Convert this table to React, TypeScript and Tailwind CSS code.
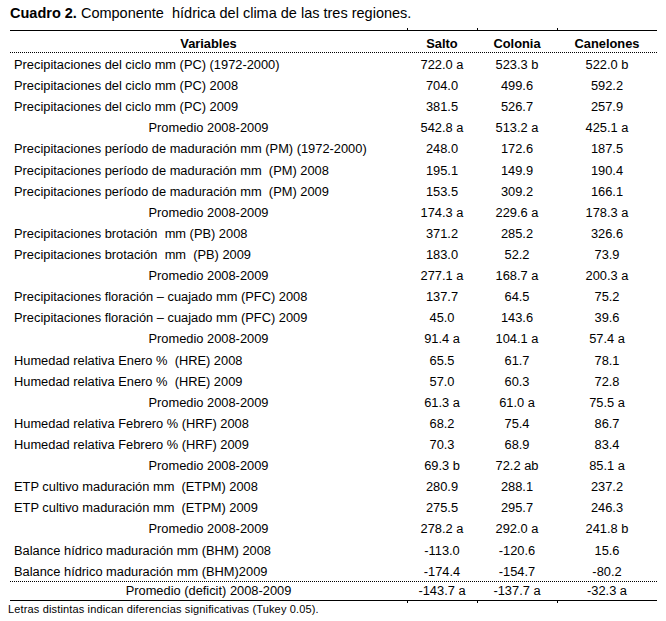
type Row = { label: string; avg?: boolean; v: [string, string, string] };

const rows: Row[] = [
  { label: "Precipitaciones del ciclo mm (PC) (1972-2000)", v: ["722.0 a", "523.3 b", "522.0 b"] },
  { label: "Precipitaciones del ciclo mm (PC) 2008", v: ["704.0", "499.6", "592.2"] },
  { label: "Precipitaciones del ciclo mm (PC) 2009", v: ["381.5", "526.7", "257.9"] },
  { label: "Promedio 2008-2009", avg: true, v: ["542.8 a", "513.2 a", "425.1 a"] },
  { label: "Precipitaciones período de maduración mm (PM) (1972-2000)", v: ["248.0", "172.6", "187.5"] },
  { label: "Precipitaciones período de maduración mm  (PM) 2008", v: ["195.1", "149.9", "190.4"] },
  { label: "Precipitaciones período de maduración mm  (PM) 2009", v: ["153.5", "309.2", "166.1"] },
  { label: "Promedio 2008-2009", avg: true, v: ["174.3 a", "229.6 a", "178.3 a"] },
  { label: "Precipitaciones brotación  mm (PB) 2008", v: ["371.2", "285.2", "326.6"] },
  { label: "Precipitaciones brotación  mm  (PB) 2009", v: ["183.0", "52.2", "73.9"] },
  { label: "Promedio 2008-2009", avg: true, v: ["277.1 a", "168.7 a", "200.3 a"] },
  { label: "Precipitaciones floración – cuajado mm (PFC) 2008", v: ["137.7", "64.5", "75.2"] },
  { label: "Precipitaciones floración – cuajado mm (PFC) 2009", v: ["45.0", "143.6", "39.6"] },
  { label: "Promedio 2008-2009", avg: true, v: ["91.4 a", "104.1 a", "57.4 a"] },
  { label: "Humedad relativa Enero %  (HRE) 2008", v: ["65.5", "61.7", "78.1"] },
  { label: "Humedad relativa Enero %  (HRE) 2009", v: ["57.0", "60.3", "72.8"] },
  { label: "Promedio 2008-2009", avg: true, v: ["61.3 a", "61.0 a", "75.5 a"] },
  { label: "Humedad relativa Febrero % (HRF) 2008", v: ["68.2", "75.4", "86.7"] },
  { label: "Humedad relativa Febrero % (HRF) 2009", v: ["70.3", "68.9", "83.4"] },
  { label: "Promedio 2008-2009", avg: true, v: ["69.3 b", "72.2 ab", "85.1 a"] },
  { label: "ETP cultivo maduración mm  (ETPM) 2008", v: ["280.9", "288.1", "237.2"] },
  { label: "ETP cultivo maduración mm  (ETPM) 2009", v: ["275.5", "295.7", "246.3"] },
  { label: "Promedio 2008-2009", avg: true, v: ["278.2 a", "292.0 a", "241.8 b"] },
  { label: "Balance hídrico maduración mm (BHM) 2008", v: ["-113.0", "-120.6", "15.6"] },
  { label: "Balance hídrico maduración mm (BHM)2009", v: ["-174.4", "-154.7", "-80.2"] },
];

const cols = "grid grid-cols-[397px_70px_80px_100px]";

const Ticks = () => (
  <div className={`${cols} h-[2px]`}>
    <div />
    <div className="border-l border-black" />
    <div className="border-l border-black" />
    <div className="border-l border-black" />
  </div>
);

const DataRow = ({ row }: { row: Row }) => (
  <div className={`${cols} h-[21.12px] pt-[2px] items-center`}>
    <div className={`whitespace-pre ${row.avg ? "text-center" : "pl-[4px]"}`}>{row.label}</div>
    {row.v.map((x, i) => (
      <div key={i} className="text-center whitespace-pre">
        {x}
      </div>
    ))}
  </div>
);

export default function App() {
  return (
    <div className="w-[666px] h-[621px] bg-white text-black font-['Liberation_Sans',Arial,sans-serif] overflow-hidden">
      <p className="pl-[10px] pt-[5px] text-[14.5px] leading-[16px] whitespace-pre">
        <b>Cuadro 2.</b> Componente  hídrica del clima de las tres regiones.
      </p>
      <div className="ml-[10px] mt-[7px] w-[647px] text-[12.85px] leading-[15px]">
        <Ticks />
        <div className="border-t border-black" />
        <div className={`${cols} h-[22px] pt-[3px] items-center font-bold border-b border-dotted border-black`}>
          <div className="text-center">Variables</div>
          <div className="text-center">Salto</div>
          <div className="text-center">Colonia</div>
          <div className="text-center">Canelones</div>
        </div>
        {rows.map((r, i) => (
          <DataRow key={i} row={r} />
        ))}
        <div className="border-t border-dotted border-black" />
        <div className={`${cols} h-[19px] items-center border-b border-black`}>
          <div className="text-center">Promedio (deficit) 2008-2009</div>
          <div className="text-center">-143.7 a</div>
          <div className="text-center">-137.7 a</div>
          <div className="text-center">-32.3 a</div>
        </div>
        <Ticks />
      </div>
      <p className="pl-[8px] text-[11px] tracking-[0.15px] leading-[12px]">
        Letras distintas indican diferencias significativas (Tukey 0.05).
      </p>
    </div>
  );
}
